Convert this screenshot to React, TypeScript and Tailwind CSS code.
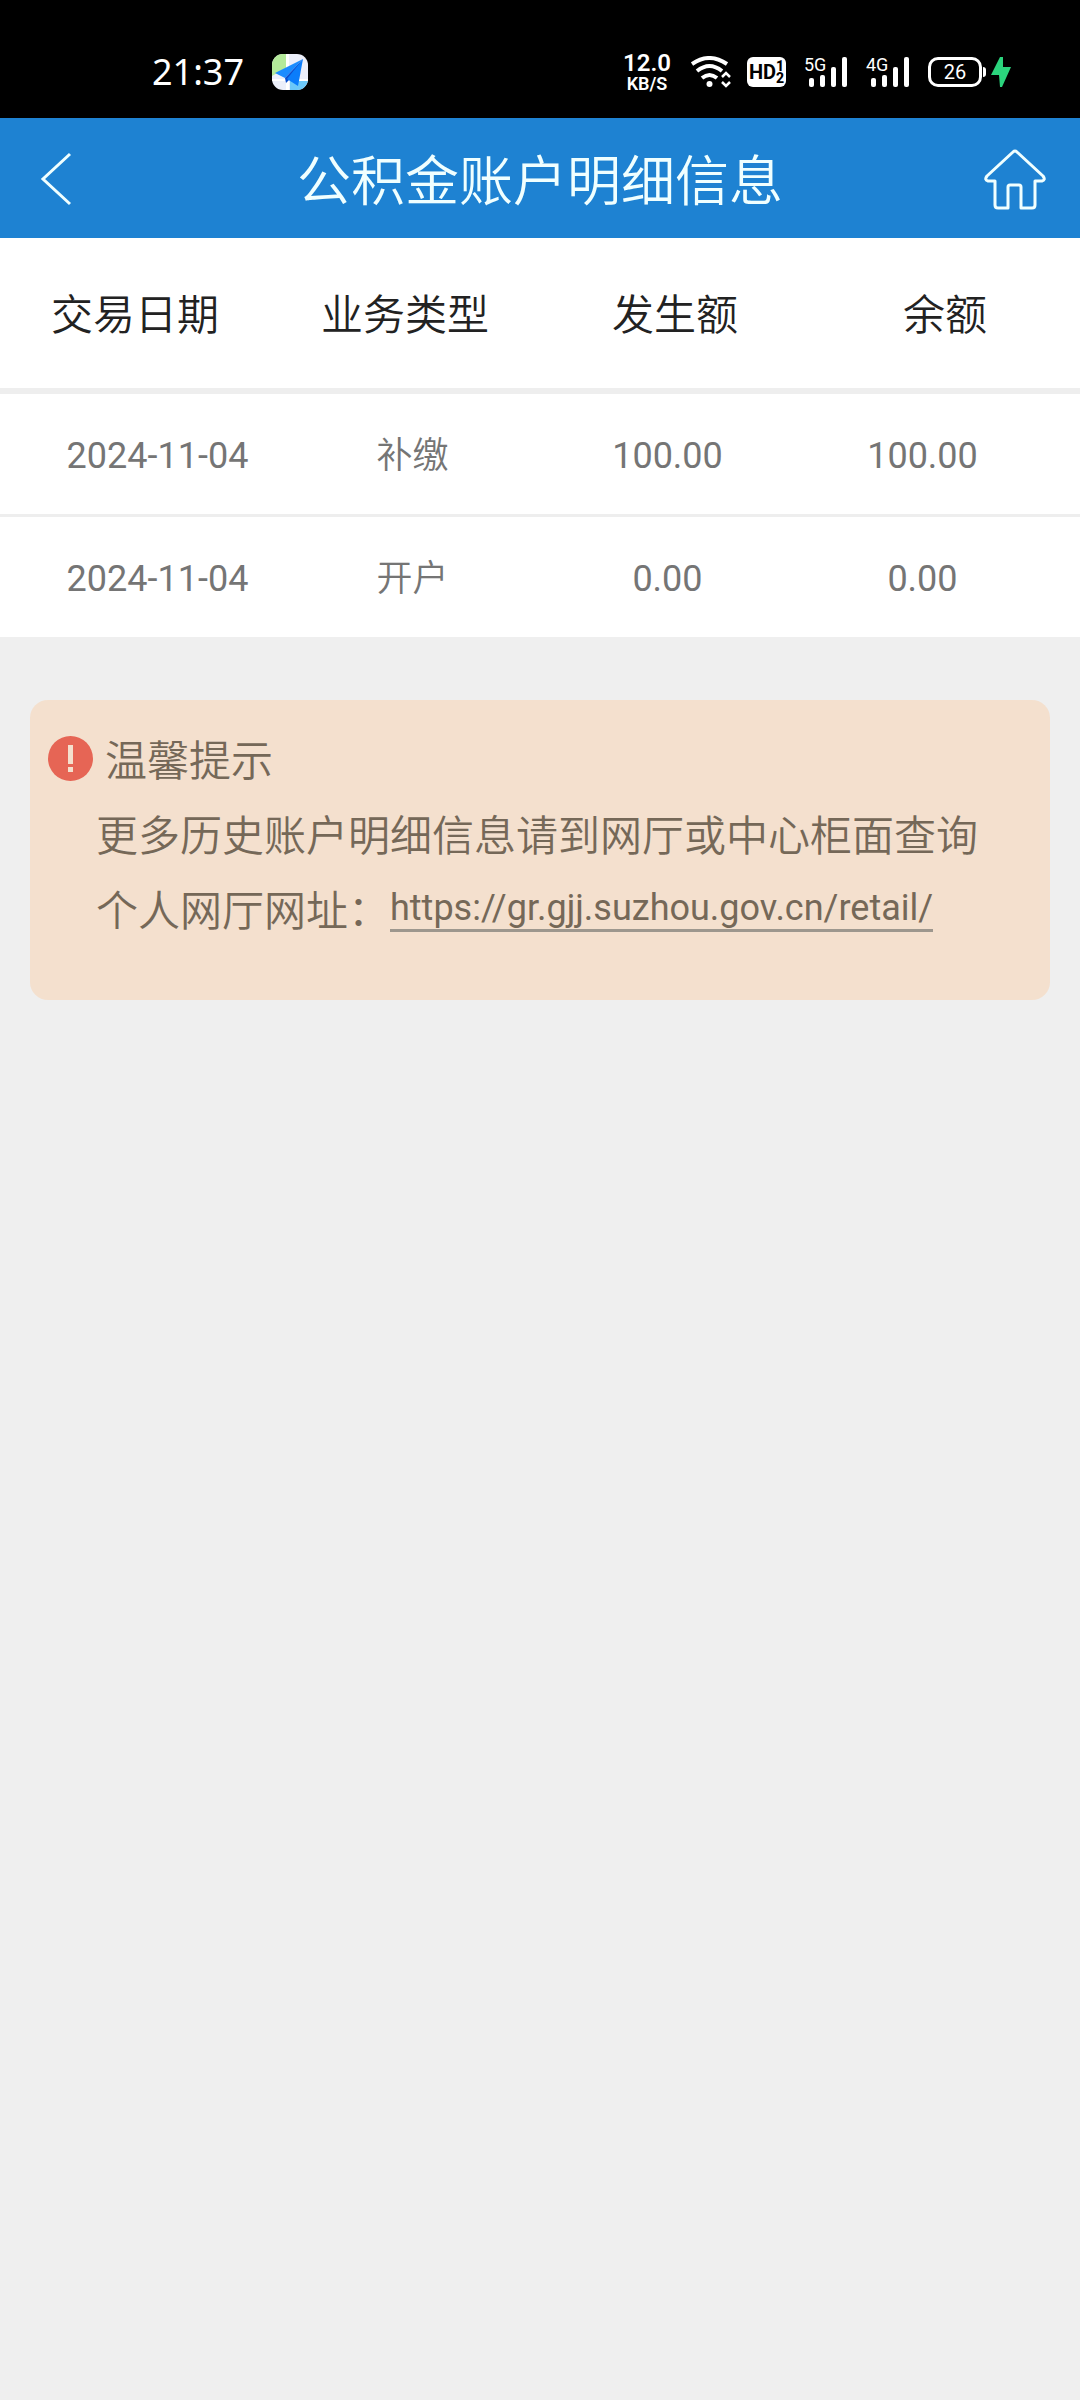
import type { ReactNode } from 'react'

interface DetailRow {
  date: string
  type: string
  amount: string
  balance: string
}

const columns: string[] = ['交易日期', '业务类型', '发生额', '余额']

const rows: DetailRow[] = [
  { date: '2024-11-04', type: '补缴', amount: '100.00', balance: '100.00' },
  { date: '2024-11-04', type: '开户', amount: '0.00', balance: '0.00' },
]

const siteUrl = 'https://gr.gjj.suzhou.gov.cn/retail/'

function MapAppIcon() {
  return (
    <svg className="h-9 w-9" viewBox="0 0 36 36" aria-hidden="true">
      <defs>
        <clipPath id="map-tile">
          <rect width="36" height="36" rx="11" />
        </clipPath>
      </defs>
      <g clipPath="url(#map-tile)">
        <rect width="36" height="36" fill="#eceffa" />
        <path d="M0 0h14v14L0 22z" fill="#b4ea9a" />
        <path d="M18 27h18v9H18z" fill="#6cc8f8" />
        <path d="M14 0h3v36h-3zM0 25h36v2H0z" fill="#fff" />
      </g>
      <path d="M31 5L3 19l10 5z" fill="#1b8cff" />
      <path d="M31 5L13 24l1 5 4-4z" fill="#0a4fd0" />
      <path d="M31 5L15 25l11 7z" fill="#0b7dfb" />
    </svg>
  )
}

function WifiIcon() {
  return (
    <svg className="h-8 w-10" viewBox="0 0 40 32" fill="none" stroke="#fff" aria-hidden="true">
      <path d="M1 8q17-12 35 0" strokeWidth="4" />
      <path d="M6 15q12.500-10 25 0" strokeWidth="4" />
      <path d="M11 22q7.500-6 15 0" strokeWidth="4" />
      <circle cx="18.500" cy="28" r="3" fill="#fff" stroke="none" />
      <path d="M31 21l4-4 4 4M31 26l4 4 4-4" strokeWidth="2.500" />
    </svg>
  )
}

function Signal({ label }: { label: string }) {
  return (
    <div className="relative h-[30px] w-11">
      <span className="absolute top-0 left-0 text-lg leading-4">{label}</span>
      <svg className="h-[30px] w-11" viewBox="0 0 44 30" fill="#fff" aria-hidden="true">
        <rect x="5" y="21" width="5" height="9" rx="2" />
        <rect x="16" y="18" width="5" height="12" rx="2" />
        <rect x="27" y="10" width="5" height="20" rx="2" />
        <rect x="38" y="0" width="5" height="30" rx="2" />
      </svg>
    </div>
  )
}

function Battery({ level }: { level: number }) {
  return (
    <div className="flex items-center">
      <div className="flex h-[30px] w-[54px] items-center justify-center rounded-[10px] border-3 border-white text-xl leading-6">
        {level}
      </div>
      <div className="ml-px h-[10px] w-[3px] rounded-r-sm bg-white" />
      <svg className="ml-[5px] h-[30px] w-5" viewBox="0 0 20 30" fill="#2bd47d" aria-hidden="true">
        <path d="M9 0L0 18h8l1 12h2l9-20h-8V0z" />
      </svg>
    </div>
  )
}

function StatusBar() {
  return (
    <div className="flex h-[118px] items-center bg-black pt-[26px] pr-[69px] pl-[152px] text-white">
      <span className="font-['Noto_Sans'] text-4xl">21:37</span>
      <div className="ml-7">
        <MapAppIcon />
      </div>
      <div className="ml-auto flex items-center">
        <div className="flex flex-col items-center font-semibold">
          <span className="text-2xl leading-6">12.0</span>
          <span className="text-lg leading-[18px]">KB/S</span>
        </div>
        <div className="ml-5">
          <WifiIcon />
        </div>
        <div className="ml-4 flex h-[30px] w-[39px] items-center justify-center rounded-md bg-white text-black">
          <span className="text-xl font-bold">HD</span>
          <span className="flex flex-col text-sm leading-3 font-extrabold">
            <span>1</span>
            <span>2</span>
          </span>
        </div>
        <div className="ml-[18px]">
          <Signal label="5G" />
        </div>
        <div className="ml-[18px]">
          <Signal label="4G" />
        </div>
        <div className="ml-[18px]">
          <Battery level={26} />
        </div>
      </div>
    </div>
  )
}

function HeaderBar() {
  return (
    <header className="flex h-[120px] items-center justify-between bg-[#1e82d2] pt-0.5 pr-[34px] pl-10 text-[#f0ffff]">
      <button type="button" aria-label="返回" className="w-14 cursor-pointer">
        <svg className="h-[54px] w-8" viewBox="0 0 32 54" fill="none" stroke="currentColor" strokeWidth="3">
          <path d="M30 2L3 27l27 25" />
        </svg>
      </button>
      <h1 className="pt-2 text-[54px] leading-[60px] font-[350]">公积金账户明细信息</h1>
      <button type="button" aria-label="首页" className="cursor-pointer">
        <svg
          className="h-[62px] w-[62px]"
          viewBox="0 -1 62 62"
          fill="none"
          stroke="currentColor"
          strokeWidth="3"
          strokeLinejoin="round"
        >
          <path d="M29 3q2-2 4 0l26 24q3 4-1 5h-7v24q0 3-3 3H37V38q0-2-2-2h-9q-2 0-2 2v21H14q-3 0-3-3V32H4q-4-1-1-5z" />
        </svg>
      </button>
    </header>
  )
}

function NumberCell({ children }: { children: ReactNode }) {
  return <td className="text-center">{children}</td>
}

function DetailTable() {
  return (
    <table className="block bg-white">
      <thead className="block border-b-6 border-[#eeeeee]">
        <tr className="grid h-[150px] grid-cols-4 items-center pt-1.5">
          {columns.map((column) => (
            <th key={column} scope="col" className="text-[42px] leading-[60px] font-[350] text-[#222222]">
              {column}
            </th>
          ))}
        </tr>
      </thead>
      <tbody className="block divide-y-3 divide-[#eeeeee] text-4xl text-[#757575]">
        {rows.map((row) => (
          <tr key={row.type} className="box-content grid h-[116px] grid-cols-4 items-center px-[30px] pt-1">
            <NumberCell>{row.date}</NumberCell>
            <td className="text-center font-[350]">{row.type}</td>
            <NumberCell>{row.amount}</NumberCell>
            <NumberCell>{row.balance}</NumberCell>
          </tr>
        ))}
      </tbody>
    </table>
  )
}

function Notice() {
  return (
    <section className="mx-[30px] mt-[63px] rounded-[18px] bg-[#f4e0ce] px-[18px] pt-6 pb-[51px] text-[42px] leading-[75px] font-[350] text-[#756858]">
      <h2 className="flex items-center gap-3">
        <svg className="mb-1.5 h-[45px] w-[45px]" viewBox="0 0 45 45" aria-hidden="true">
          <circle cx="22.500" cy="22.500" r="22.500" fill="#e66555" />
          <path d="M20 9h5v19h-5zM20 31h5v5h-5z" fill="#f4e0ce" />
        </svg>
        温馨提示
      </h2>
      <div className="pl-12">
        <p>更多历史账户明细信息请到网厅或中心柜面查询</p>
        <p className="flex items-center">
          个人网厅网址：
          <a href={siteUrl} className="mb-1 border-b-3 border-[#9d978e] text-4xl leading-[42px] font-normal">
            {siteUrl}
          </a>
        </p>
      </div>
    </section>
  )
}

export default function App() {
  return (
    <div className="min-h-screen bg-[#efefef] font-['Roboto','Noto_Sans_CJK_SC',sans-serif]">
      <StatusBar />
      <HeaderBar />
      <main>
        <DetailTable />
        <Notice />
      </main>
    </div>
  )
}
